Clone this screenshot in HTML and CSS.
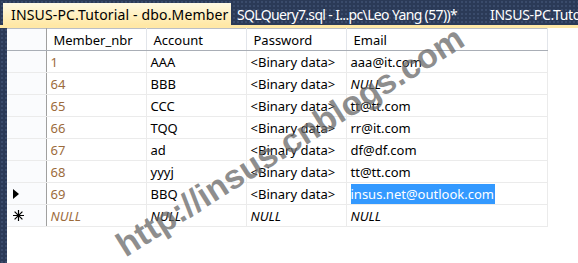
FILE: index.html
```html
<!DOCTYPE html>
<html>
<head>
<meta charset="utf-8">
<link rel="stylesheet" href="styles.css">
</head>
<body>
<div class="app">
  <div class="tabs">
    <div class="tab active">
      <span class="tab-title">INSUS-PC.Tutorial - dbo.Member</span>
      <svg class="close" width="9" height="9" viewBox="0 0 9 9"><path d="M1 1L8 8M8 1L1 8" stroke="#5a5a5a" stroke-width="1.4"/></svg>
    </div>
    <div class="tab second"><span class="tab-title">SQLQuery7.sql - I...pc\Leo Yang (57))*</span></div>
    <div class="tab third"><span class="tab-title">INSUS-PC.Tutorial - dbo.Member</span></div>
  </div>
  <div class="tabline"></div>
  <div class="body">
    <div class="leftstrip"></div>
    <div class="content">
      <table class="grid">
        <thead>
          <tr>
            <th class="rh"></th>
            <th class="c1">Member_nbr</th>
            <th class="c2">Account</th>
            <th class="c3">Password</th>
            <th class="c4">Email</th>
          </tr>
        </thead>
        <tbody>
          <tr><td class="rh"></td><td class="num">1</td><td>AAA</td><td>&lt;Binary data&gt;</td><td>aaa@it.com</td></tr>
          <tr><td class="rh"></td><td class="num">64</td><td>BBB</td><td>&lt;Binary data&gt;</td><td class="null">NULL</td></tr>
          <tr><td class="rh"></td><td class="num">65</td><td>CCC</td><td>&lt;Binary data&gt;</td><td>tt@tt.com</td></tr>
          <tr><td class="rh"></td><td class="num">66</td><td>TQQ</td><td>&lt;Binary data&gt;</td><td>rr@it.com</td></tr>
          <tr><td class="rh"></td><td class="num">67</td><td>ad</td><td>&lt;Binary data&gt;</td><td>df@df.com</td></tr>
          <tr><td class="rh"></td><td class="num">68</td><td>yyyj</td><td>&lt;Binary data&gt;</td><td>tt@tt.com</td></tr>
          <tr><td class="rh"><svg width="6" height="10" viewBox="0 0 6 10"><path d="M0 0L6 5L0 10Z" fill="#000"/></svg></td><td class="num">69</td><td>BBQ</td><td>&lt;Binary data&gt;</td><td><span class="sel">insus.net@outlook.com</span></td></tr>
          <tr><td class="rh"><svg width="11" height="11" viewBox="0 0 11 11"><path d="M5.5 0V11M0 5.5H11M1.6 1.6L9.4 9.4M9.4 1.6L1.6 9.4" stroke="#000" stroke-width="1.2"/></svg></td><td class="num null">NULL</td><td class="null">NULL</td><td class="null">NULL</td><td class="null">NULL</td></tr>
        </tbody>
      </table>
    </div>
  </div>
  <div class="watermark">http://insus.cnblogs.com</div>
</div>
</body>
</html>
```

FILE: styles.css
```css
html, body {
  margin: 0;
  padding: 0;
  background: #fff;
}

.app {
  position: relative;
  width: 578px;
  height: 263px;
  overflow: hidden;
  font-family: "Noto Sans", "Open Sans", sans-serif;
}

.tabs {
  height: 25px;
  display: flex;
  align-items: flex-end;
  background-color: #2b3a57;
  background-image: radial-gradient(circle, #3a4b6b 0.8px, transparent 1.1px);
  background-size: 4px 4px;
  color: #fff;
  font-size: 14px;
  overflow: hidden;
}

.tab {
  height: 22px;
  display: flex;
  align-items: center;
  white-space: nowrap;
  flex-shrink: 0;
}

.tab.active {
  margin-left: 3px;
  width: 228px;
  box-sizing: border-box;
  padding-left: 8px;
  background: linear-gradient(#fff9e3, #ffefbd 60%, #ffe8a6);
  color: #000;
  letter-spacing: 0.15px;
}

.close {
  margin-left: 9px;
}

.tab.second {
  margin-left: 6px;
  letter-spacing: -0.65px;
}

.tab.third {
  margin-left: 33px;
  letter-spacing: -0.3px;
}

.tabline {
  height: 3px;
  background: #ffe8a6;
}

.body {
  display: flex;
  height: 235px;
}

.leftstrip {
  width: 7px;
  background-color: #2b3a57;
  background-image: radial-gradient(circle, #3a4b6b 0.8px, transparent 1.1px);
  background-size: 4px 4px;
}

.content {
  flex: 1;
  background: #fff;
}

.grid {
  border-collapse: collapse;
  table-layout: fixed;
  font-size: 13px;
  color: #000;
}

.grid th,
.grid td {
  height: 21px;
  padding: 0 0 0 4px;
  text-align: left;
  white-space: nowrap;
  overflow: hidden;
  border: 1px solid #ebebeb;
  font-weight: normal;
}

.grid th {
  padding-left: 7px;
  border-top: 1px solid #b9bec6;
  border-bottom: 1px solid #a9aeb6;
  border-left: 1px solid #e2e5ea;
  border-right: 1px solid #e2e5ea;
  background: #fff;
}

.grid .rh {
  width: 39px;
  padding: 0 0 0 6px;
  box-sizing: border-box;
  border-left: none;
  border-right: 1px solid #a0a0a0;
  background: #fafbfd;
}

.grid th.c1, .grid th.c2, .grid th.c3 { width: 92px; }
.grid th.c4 { width: 193px; }

.grid td svg {
  display: block;
}

.num {
  color: #9c6b3c;
}

.null {
  font-style: italic;
}

.sel {
  background: #3399ff;
  color: #fff;
  padding: 1px 1px 1px 0;
}

.watermark {
  position: absolute;
  left: 70px;
  top: 122px;
  width: 440px;
  text-align: center;
  font-family: "Liberation Sans", Arial, sans-serif;
  font-weight: bold;
  font-size: 34px;
  color: rgba(105, 105, 105, 0.75);
  transform: rotate(-32deg);
  white-space: nowrap;
  pointer-events: none;
}
```
